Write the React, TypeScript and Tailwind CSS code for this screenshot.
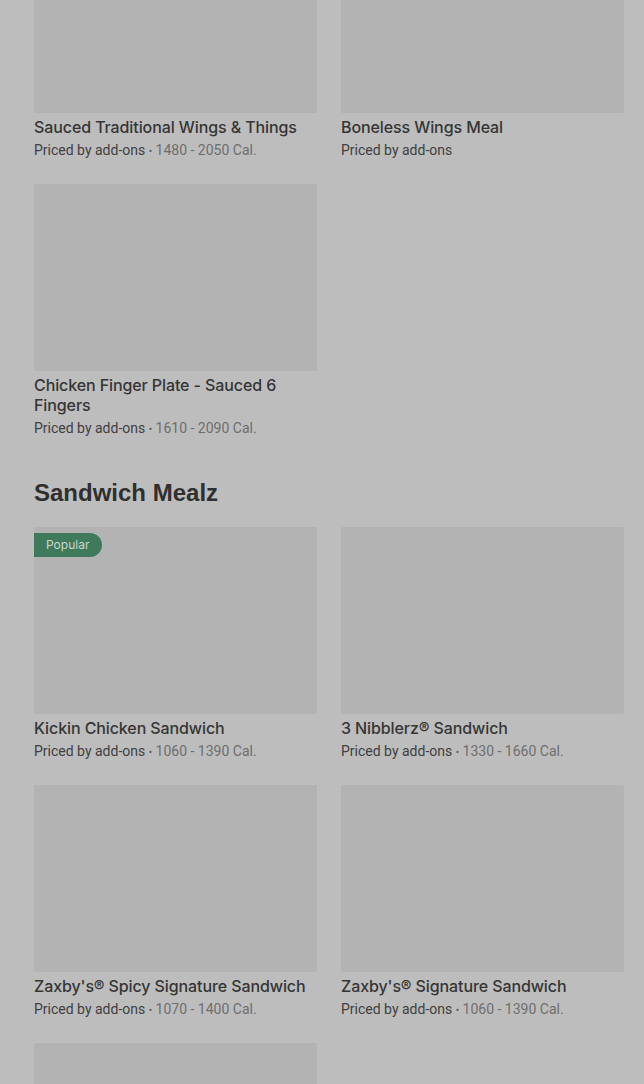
import React from "react";

type Item = { title: string; cal?: string; popular?: boolean; imageOnly?: boolean };

function Card({ item }: { item: Item }) {
  return (
    <div className="flex flex-col">
      <div className="relative h-[187px] w-full bg-[#b3b3b3] rounded-[2px]">
        {item.popular && (
          <div className="absolute left-0 top-[6px] flex h-[24px] items-center rounded-r-full bg-[#3e7a5b] pl-3 pr-[13px] text-[12px] leading-none text-[#c9d9cf]">
            Popular
          </div>
        )}
      </div>
      {!item.imageOnly && (
        <>
          <div className="mt-[4px] text-[16px] font-medium leading-[20px] tracking-[-0.1px] text-[#353535]">
            {item.title}
          </div>
          <div
            className="mt-[3px] h-[20px] text-[14px] leading-[20px] text-[#3f3f3f]"
            style={{ fontFamily: "Roboto, 'Noto Sans', sans-serif" }}
          >
            Priced by add-ons
            {item.cal && (
              <span className="text-[#6e6e6e]">
                {" "}
                <span className="text-[10px] leading-none text-[#5a5a5a]">•</span> {item.cal}
              </span>
            )}
          </div>
        </>
      )}
    </div>
  );
}

function Grid({ items }: { items: Item[] }) {
  return (
    <div className="grid grid-cols-2 gap-x-[24px] gap-y-[24px]">
      {items.map((it, i) => (
        <Card key={i} item={it} />
      ))}
    </div>
  );
}

export default function App() {
  return (
    <div
      className="h-[1084px] w-[644px] overflow-hidden bg-[#bdbdbd]"
      style={{ fontFamily: "Inter, 'Noto Sans', sans-serif" }}
    >
      <div className="-mt-[74px] pl-[34px] pr-[20px]">
        <Grid
          items={[
            { title: "Sauced Traditional Wings & Things", cal: "1480 - 2050 Cal." },
            { title: "Boneless Wings Meal" },
            { title: "Chicken Finger Plate - Sauced 6 Fingers", cal: "1610 - 2090 Cal." },
          ]}
        />
        <h2
          className="mt-[39px] mb-[18px] text-[24px] font-bold leading-[32px] text-[#2f2f2f]"
          style={{ fontFamily: "'Liberation Sans', Arial, sans-serif" }}
        >
          Sandwich Mealz
        </h2>
        <Grid
          items={[
            { title: "Kickin Chicken Sandwich", cal: "1060 - 1390 Cal.", popular: true },
            { title: "3 Nibblerz® Sandwich", cal: "1330 - 1660 Cal." },
            { title: "Zaxby's® Spicy Signature Sandwich", cal: "1070 - 1400 Cal." },
            { title: "Zaxby's® Signature Sandwich", cal: "1060 - 1390 Cal." },
            { title: "", imageOnly: true },
          ]}
        />
      </div>
    </div>
  );
}
